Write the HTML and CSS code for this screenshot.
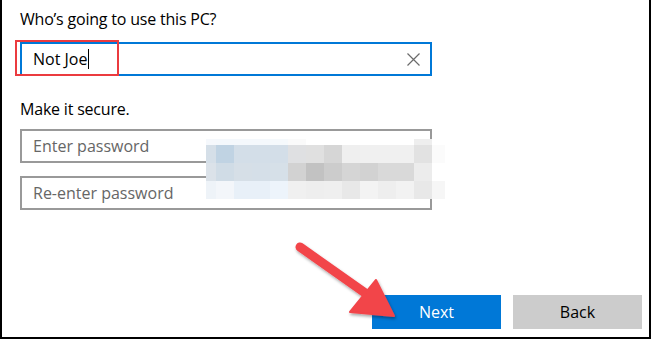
FILE: index.html
```html
<!DOCTYPE html>
<html lang="en">
<head>
    <meta charset="UTF-8">
    <title>Who's going to use this PC?</title>
    <link rel="stylesheet" href="styles.css">
</head>
<body>
    <div class="frame">
        <div class="account-form">
            <h2 class="heading">Who’s going to use this PC?</h2>
            <div class="field field-active">
                <span class="field-value">Not Joe</span><span class="caret"></span>
                <svg class="clear" width="13" height="13" viewBox="0 0 13 13">
                    <path d="M0.5 0.5 L12.5 12.5 M12.5 0.5 L0.5 12.5" stroke="#6b6b6b" stroke-width="1.2" fill="none"/>
                </svg>
                <div class="highlight"></div>
            </div>

            <h2 class="heading heading-secure">Make it secure.</h2>
            <div class="field-group">
                <div class="field"><span class="placeholder">Enter password</span></div>
                <div class="field"><span class="placeholder">Re-enter password</span></div>
                <!-- pixelated blur over the password hint -->
                <div class="blur">
                    <div class="blur-row thin">
                        <i style="background:#f5f8fc"></i><i style="background:#f4f8fc"></i><i style="background:#f4f8fc"></i><i style="background:#f4f8fc"></i><i style="background:#f5f9fc"></i><i style="background:#fafafa"></i><i></i><i></i><i></i><i></i><i></i><i></i><i style="background:#eeeeee"></i><i></i>
                    </div>
                    <div class="blur-row">
                        <i style="background:#d5dfe8"></i><i style="background:#c0d3e3"></i><i style="background:#d3dee8"></i><i style="background:#d3dee8"></i><i style="background:#d3dee8"></i><i style="background:#dfe0e2"></i><i style="background:#e0e0e0"></i><i style="background:#d6d6d6"></i><i style="background:#efefef"></i><i style="background:#f0f0f0"></i><i style="background:#f0f0f0"></i><i style="background:#f0f0f0"></i><i style="background:#e2e2e2"></i><i style="background:#fbfbfb"></i>
                    </div>
                    <div class="blur-row">
                        <i style="background:#dbe2e9"></i><i style="background:#d0dce6"></i><i style="background:#d6dfe7"></i><i style="background:#d5dfe8"></i><i style="background:#d6e0e8"></i><i style="background:#d2d2d2"></i><i style="background:#c2c2c2"></i><i style="background:#cccccc"></i><i style="background:#d5d5d5"></i><i style="background:#d2d2d2"></i><i style="background:#d9d9d9"></i><i style="background:#d9d9d9"></i><i style="background:#ececec"></i><i></i>
                    </div>
                    <div class="blur-row">
                        <i style="background:#eef3f8"></i><i style="background:#f3f6fa"></i><i style="background:#e8f0f8"></i><i style="background:#e8f0f8"></i><i style="background:#edf4fb"></i><i style="background:#f0f0f0"></i><i style="background:#eeeeee"></i><i style="background:#efefef"></i><i style="background:#e8e8e8"></i><i style="background:#f3f3f3"></i><i style="background:#eeeeee"></i><i style="background:#f2f2f2"></i><i style="background:#e8e8e8"></i><i style="background:#f6f6f6"></i>
                    </div>
                </div>
            </div>
        </div>

        <div class="actions">
            <button type="button" class="btn btn-next">Next</button>
            <button type="button" class="btn btn-back">Back</button>
        </div>

        <!-- red annotation arrow -->
        <svg class="arrow" width="120" height="90" viewBox="0 0 120 90">
            <defs>
                <filter id="shadow" x="-20%" y="-20%" width="140%" height="140%">
                    <feDropShadow dx="1" dy="2" stdDeviation="1.5" flood-color="#000" flood-opacity="0.35"/>
                </filter>
            </defs>
            <g filter="url(#shadow)" fill="#f2444a" stroke="#f2444a">
                <line x1="8" y1="9" x2="76" y2="57" stroke-width="9" stroke-linecap="round"/>
                <polygon points="102,78 58,74 84,42" stroke-width="2" stroke-linejoin="round"/>
            </g>
        </svg>
    </div>
</body>
</html>
```

FILE: styles.css
```css
body {
    margin: 0;
    font-family: "Open Sans", "Noto Sans", Arial, sans-serif;
    background: #fff;
}

.frame {
    position: relative;
    width: 651px;
    height: 339px;
    box-sizing: border-box;
    border: 2px solid #000;
    border-top: none;
    display: flex;
    flex-direction: column;
}

.account-form {
    padding: 7px 0 0 18px;
    width: 412px;
}

.heading {
    margin: 0;
    font-size: 16px;
    font-weight: normal;
    line-height: 24px;
    color: #000;
    letter-spacing: -0.2px;
}

.heading-secure {
    margin-top: 21px;
}

.field {
    position: relative;
    height: 34px;
    box-sizing: border-box;
    border: 2px solid #999;
    display: flex;
    align-items: center;
    padding-left: 11px;
    font-size: 16px;
}

.field-active {
    margin-top: 11px;
    border-color: #0078d7;
}

.field-value {
    color: #000;
}

.caret {
    width: 1px;
    height: 20px;
    background: #000;
    margin-left: 1px;
}

.clear {
    margin-left: auto;
    margin-right: 10px;
}

.highlight {
    position: absolute;
    left: -7px;
    top: -4px;
    width: 104px;
    height: 36px;
    box-sizing: border-box;
    border: 2px solid #eb3b3f;
}

.field-group {
    position: relative;
    margin-top: 8px;
    display: flex;
    flex-direction: column;
    gap: 13px;
}

.placeholder {
    color: #666;
}

.blur {
    position: absolute;
    left: 186px;
    top: 10px;
    display: flex;
    flex-direction: column;
}

.blur-row {
    display: flex;
    height: 18px;
}

.blur-row.thin {
    height: 6px;
}

.blur-row i {
    display: block;
    width: 18px;
}

.blur-row i:first-child {
    width: 10px;
}

.blur-row i:last-child {
    width: 13px;
}

.actions {
    margin-top: auto;
    display: flex;
    justify-content: flex-end;
    gap: 12px;
    padding: 0 7px 8px 0;
}

.btn {
    width: 129px;
    height: 34px;
    border: none;
    font-family: inherit;
    font-size: 16px;
    padding: 0;
}

.btn-next {
    background: #0078d7;
    color: #fff;
}

.btn-back {
    background: #cccccc;
    color: #000;
}

.arrow {
    position: absolute;
    left: 290px;
    top: 238px;
}
```
